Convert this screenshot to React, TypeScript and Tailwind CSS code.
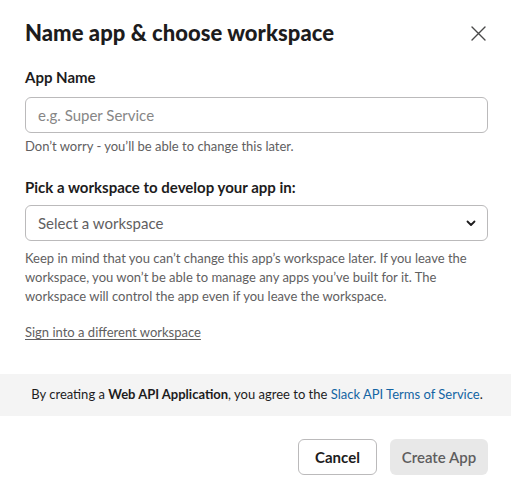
export default function App() {
  return (
    <main
      className="w-[511px] h-[496px] bg-white text-[#1d1c1d] overflow-hidden"
      style={{ fontFamily: "Lato, 'Noto Sans', sans-serif" }}
    >
      {/* Begin: Header */}
      <header className="flex items-center justify-between pl-[25px] pr-[25px] pt-[18px] h-[48px]">
        <h1 className="text-[22px] font-black leading-[30px] tracking-[0.05px]">
          Name app &amp; choose workspace
        </h1>
        <button className="w-[15px] h-[15px] flex items-center justify-center">
          <svg width="15" height="15" viewBox="0 0 15 15" fill="none">
            <path d="M1 1 L14 14 M14 1 L1 14" stroke="#4a494a" strokeWidth="1.4" strokeLinecap="round" />
          </svg>
        </button>
      </header>
      {/* End: Header */}

      {/* Begin: Form */}
      <section className="pl-[25px] pr-[23px] pt-[18px]">
        <label className="block text-[15px] font-bold leading-[22px]">App Name</label>
        <input
          className="mt-[9px] w-full h-[36px] px-[12px] rounded-[6px] border border-[#bbbabb] text-[15px] outline-none placeholder:text-[#868686]"
          placeholder="e.g. Super Service"
          type="text"
        />
        <p className="mt-[4px] text-[13px] leading-[18px] text-[#616061]">
          Don’t worry - you’ll be able to change this later.
        </p>

        <label className="block mt-[21px] text-[15px] font-bold leading-[22px]">
          Pick a workspace to develop your app in:
        </label>
        <div className="mt-[7px] flex items-center justify-between h-[36px] pl-[12px] pr-[11px] rounded-[6px] border border-[#bbbabb] text-[15px] text-[#616061]">
          <span>Select a workspace</span>
          <svg width="10" height="7" viewBox="0 0 10 7" fill="none">
            <path d="M1.5 1.5 L5 5 L8.5 1.5" stroke="#1d1c1d" strokeWidth="1.8" strokeLinecap="round" strokeLinejoin="round" />
          </svg>
        </div>
        <p className="mt-[8px] text-[13px] leading-[19px] text-[#616061]">
          Keep in mind that you can’t change this app’s workspace later. If you leave the
          workspace, you won’t be able to manage any apps you’ve built for it. The
          workspace will control the app even if you leave the workspace.
        </p>

        <a className="inline-block mt-[17px] text-[13px] leading-[18px] text-[#616061] underline underline-offset-2">
          Sign into a different workspace
        </a>
      </section>
      {/* End: Form */}

      {/* Begin: Terms */}
      <div className="mt-[31px] h-[42px] flex items-center justify-center pl-[3px] bg-[#f4f4f4] text-[13px] text-[#1d1c1d]">
        <span>
          By creating a <b className="font-bold">Web API Application</b>, you agree to the{" "}
          <a className="text-[#1264a3]">Slack API Terms of Service</a>.
        </span>
      </div>
      {/* End: Terms */}

      {/* Begin: Footer */}
      <footer className="flex justify-end gap-[13px] pr-[23px] pt-[23px]">
        <button className="h-[36px] w-[79px] rounded-[6px] border border-[#bbbabb] text-[15px] font-bold">
          Cancel
        </button>
        <button className="h-[36px] w-[98px] rounded-[6px] bg-[#e8e8e8] text-[15px] font-semibold text-[#5e5d5e]">
          Create App
        </button>
      </footer>
      {/* End: Footer */}
    </main>
  );
}
